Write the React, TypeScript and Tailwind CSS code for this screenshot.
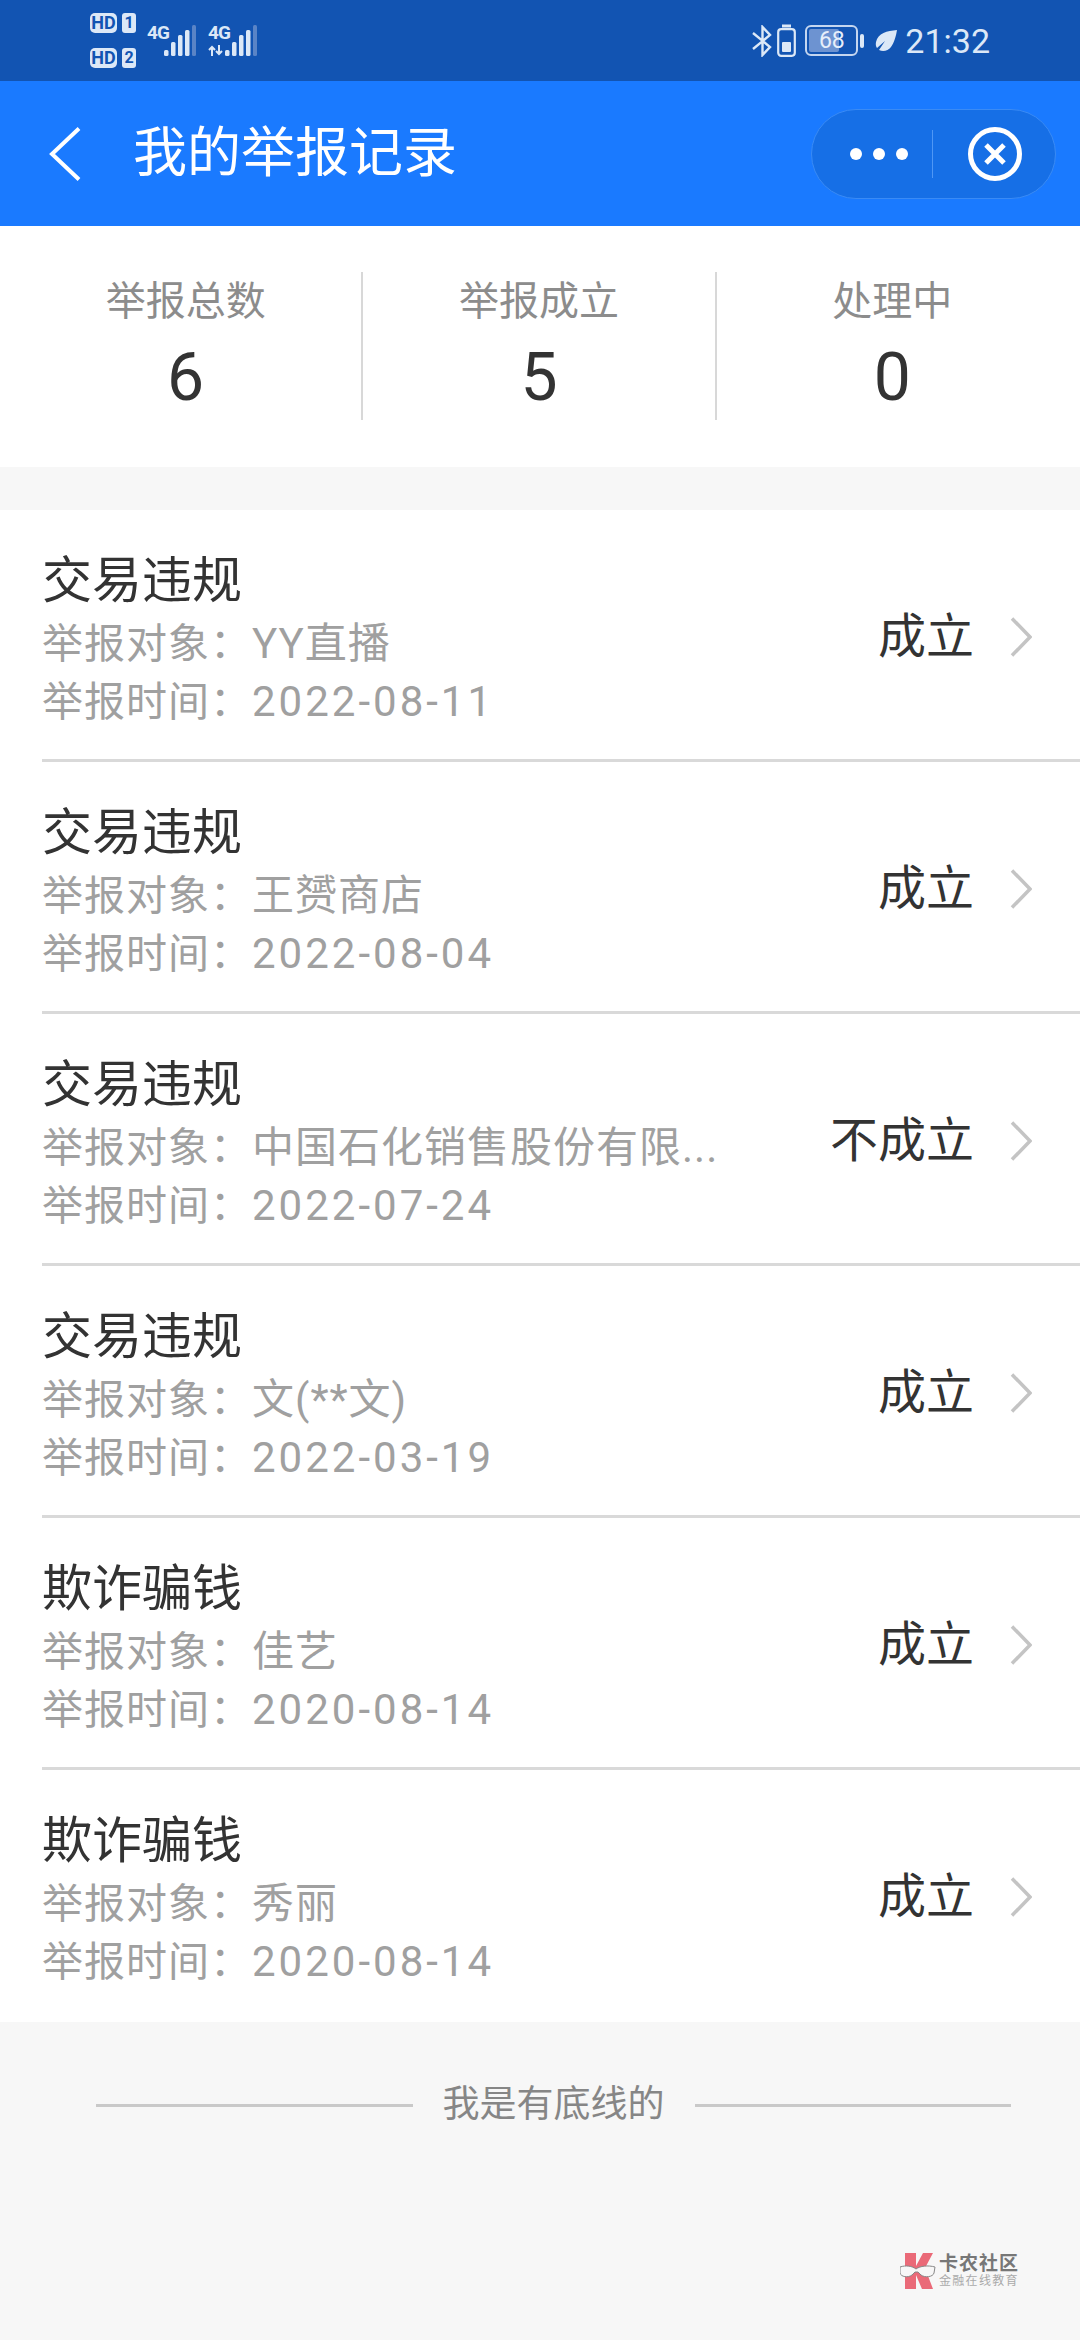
const font = { fontFamily: '"Roboto", "Noto Sans CJK SC", sans-serif' };
const narrow = { fontFamily: '"Liberation Sans Narrow", "Roboto", sans-serif' };

const records = [
  { type: "交易违规", target: "YY直播", date: "2022-08-11", result: "成立" },
  { type: "交易违规", target: "王赟商店", date: "2022-08-04", result: "成立" },
  { type: "交易违规", target: "中国石化销售股份有限...", date: "2022-07-24", result: "不成立" },
  { type: "交易违规", target: "文(**文)", date: "2022-03-19", result: "成立" },
  { type: "欺诈骗钱", target: "佳艺", date: "2020-08-14", result: "成立" },
  { type: "欺诈骗钱", target: "秀丽", date: "2020-08-14", result: "成立" },
];

const stats = [
  { label: "举报总数", value: 6 },
  { label: "举报成立", value: 5 },
  { label: "处理中", value: 0 },
];

function SimBadge({ n }: { n: number }) {
  return (
    <div className="flex h-5 items-center gap-[5px]" style={narrow}>
      <span className="flex h-5 w-[27px] items-center justify-center rounded-[5px] bg-[#dce8f7] text-[18px] leading-none font-bold text-[#1254b2]">
        HD
      </span>
      <span className="flex h-5 w-[14px] items-center justify-center rounded-[3px] bg-[#dce8f7] text-[16px] leading-none font-bold text-[#1254b2]">
        {n}
      </span>
    </div>
  );
}

function Signal({ arrows }: { arrows?: boolean }) {
  return (
    <div className="relative h-[32px] w-[50px]" style={narrow}>
      <span className="absolute top-[-1px] left-0 text-[19px] leading-[18px] font-bold tracking-[-1px] text-[#dce8f7]">
        4G
      </span>
      {arrows && (
        <svg className="absolute bottom-[1px] left-0" width="16" height="11" viewBox="0 0 16 11" fill="none" stroke="#dce8f7" strokeWidth="2">
          <path d="M4 11V2M1 5l3-3 3 3M11 0v9M8 6l3 3 3-3" />
        </svg>
      )}
      <svg className="absolute top-0 left-[17px]" width="35" height="32" viewBox="0 0 35 32">
        <rect x="0" y="25" width="4.500" height="6" rx="1.500" fill="#dce8f7" />
        <rect x="7" y="17" width="4.500" height="14" rx="1.500" fill="#dce8f7" />
        <rect x="14" y="10" width="4.500" height="21" rx="1.500" fill="#dce8f7" />
        <rect x="21" y="5" width="4.500" height="26" rx="1.500" fill="#dce8f7" />
        <rect x="28" y="0" width="4" height="31" rx="1.500" fill="#5a84c6" />
      </svg>
    </div>
  );
}

function StatusBar() {
  return (
    <div className="flex h-[81px] items-center justify-between bg-[#1254b2] pr-[90px] pl-[90px] text-[#dce8f7]">
      <div className="flex items-center">
        <div className="flex flex-col gap-[15px]">
          <SimBadge n={1} />
          <SimBadge n={2} />
        </div>
        <div className="ml-[11px] flex gap-[11px]">
          <Signal />
          <Signal arrows />
        </div>
      </div>
      <div className="flex items-center">
        <svg width="21" height="32" viewBox="0 0 21 32" fill="none" stroke="#dce8f7" strokeWidth="2.400">
          <path d="M1 8l17 14-7.500 8V2l7.500 8L1 24" />
        </svg>
        <svg className="ml-[4px]" width="19" height="33" viewBox="0 0 19 33" fill="none">
          <rect x="5" y="0.500" width="9" height="3" fill="#dce8f7" />
          <rect x="1.200" y="5.200" width="16.600" height="26.600" rx="3" stroke="#dce8f7" strokeWidth="2.200" />
          <rect x="5" y="18" width="9" height="10" rx="1" fill="#dce8f7" />
        </svg>
        <div className="relative ml-[9px] flex h-[31px] w-[53px] items-center justify-center overflow-hidden rounded-[6px] border-2 border-[#c4d6f0]">
          <div className="absolute top-[2px] bottom-[2px] left-[2px] w-[30px] rounded-[2px] bg-[#6d93d1]" />
          <span className="relative text-[23px] leading-none text-[#e6eefa]">68</span>
        </div>
        <div className="ml-[2px] h-[14px] w-[4px] rounded-[2px] bg-[#dce8f7]" />
        <svg className="ml-[11px]" width="22" height="22" viewBox="0 0 22 22">
          <path d="M22 0C12 1 3 3 1 12c-.6 3 .2 5 1 6l8-7-6 9c4 2 9 1 12-3 3-4 5-11 6-17z" fill="#dce8f7" />
        </svg>
        <span className="ml-[8px] text-[34px] leading-none">21:32</span>
      </div>
    </div>
  );
}

function Header() {
  return (
    <div className="flex h-[145px] items-center justify-between bg-[#1a7aff] pr-[24px] pl-[48px]">
      <div className="flex items-center">
        <svg width="34" height="54" viewBox="0 0 34 54" fill="none" stroke="#ffffff" strokeWidth="4">
          <path d="M31 1.500L4 27l27 25.500" />
        </svg>
        <span className="ml-[51px] text-[54px] leading-none text-white">我的举报记录</span>
      </div>
      <div className="flex h-[90px] w-[245px] items-center rounded-full border border-[#3a8bf5] bg-[#166fe6]">
        <div className="ml-[38px] flex gap-[11px]">
          <span className="h-[12px] w-[12px] rounded-full bg-white" />
          <span className="h-[12px] w-[12px] rounded-full bg-white" />
          <span className="h-[12px] w-[12px] rounded-full bg-white" />
        </div>
        <div className="ml-[24px] h-[48px] w-px bg-[#4f97f5]" />
        <svg className="ml-[35px]" width="54" height="54" viewBox="0 0 54 54" fill="none" stroke="#ffffff">
          <circle cx="27" cy="27" r="24.500" strokeWidth="5" />
          <path d="M18 18l18 18M36 18L18 36" strokeWidth="5" />
        </svg>
      </div>
    </div>
  );
}

function Stats() {
  return (
    <div className="h-[241px] bg-white px-[10px] pt-[46px]">
      <div className="grid h-[148px] grid-cols-3">
        {stats.map((s, i) => (
          <div
            key={s.label}
            className={`flex flex-col items-center border-r-2 ${i < 2 ? "border-[#d8d8d8]" : "border-transparent"}`}
          >
            <span className="mt-[2px] text-[40px] leading-[56px] text-[#8c8c8c]">{s.label}</span>
            <span className="mt-[8px] text-[66px] leading-[80px] text-[#333333]">{s.value}</span>
          </div>
        ))}
      </div>
    </div>
  );
}

function RecordRow({ r, last }: { r: (typeof records)[number]; last: boolean }) {
  return (
    <div className="h-[252px] pl-[42px]">
      <div className="flex h-[249px] items-center justify-between pt-[5px] pr-[48px]">
        <div className="min-w-0">
          <div className="mt-[3px] text-[50px] leading-[68px] text-[#333333]">{r.type}</div>
          <div className="text-[41px] leading-[57px] tracking-[1px] text-[#a0a0a0]">
            举报对象：<span className="text-[42px]">{r.target}</span>
          </div>
          <div className="text-[41px] leading-[57px] tracking-[1px] text-[#a0a0a0]">
            举报时间：<span className="text-[42px] tracking-[3px]">{r.date}</span>
          </div>
        </div>
        <div className="flex items-center">
          <span className="text-[48px] leading-none text-[#333333]">{r.result}</span>
          <svg className="ml-[36px]" width="22" height="40" viewBox="0 0 22 40" fill="none" stroke="#c4c4c4" strokeWidth="3.500">
            <path d="M2 1.500L20 20 2 38.500" />
          </svg>
        </div>
      </div>
      {!last && <div className="h-[3px] bg-[#d9d9d9]" />}
    </div>
  );
}

export default function App() {
  return (
    <div className="flex h-[2340px] w-[1080px] flex-col overflow-hidden bg-[#f7f7f7]" style={font}>
      <StatusBar />
      <Header />
      <Stats />
      <div className="mt-[43px] bg-white">
        {records.map((r, i) => (
          <RecordRow key={i} r={r} last={i === records.length - 1} />
        ))}
      </div>
      <div className="relative flex-1">
        <div className="mt-[57px] flex items-center pr-[69px] pl-[96px]">
          <div className="h-[3px] flex-1 bg-[#c9c9c9]" />
          <span className="mx-[30px] text-[37px] leading-[52px] text-[#868686]">我是有底线的</span>
          <div className="h-[3px] flex-1 bg-[#c9c9c9]" />
        </div>
        <div className="absolute top-[230px] left-[900px] flex items-center">
          <svg width="36" height="38" viewBox="0 0 36 38">
            <path d="M5 1h11v13l7-13h10l-8 15 8 21H22l-6-14v14H5z" fill="#ea6a78" />
            <path d="M0 15c6-2 12-1 16 2 4-3 12-4 19-2l-1 6c-1 4-9 5-13 2l-3-3h-3l-3 3c-4 3-11 2-12-2z" fill="#f7f7f7" stroke="#888888" strokeWidth="1" />
          </svg>
          <div className="ml-[3px]">
            <div className="text-[19px] leading-[20px] font-bold tracking-[1px] text-[#777777]">卡农社区</div>
            <div className="text-[12px] leading-[14px] tracking-[1.300px] text-[#aaaaaa]">金融在线教育</div>
          </div>
        </div>
      </div>
    </div>
  );
}
